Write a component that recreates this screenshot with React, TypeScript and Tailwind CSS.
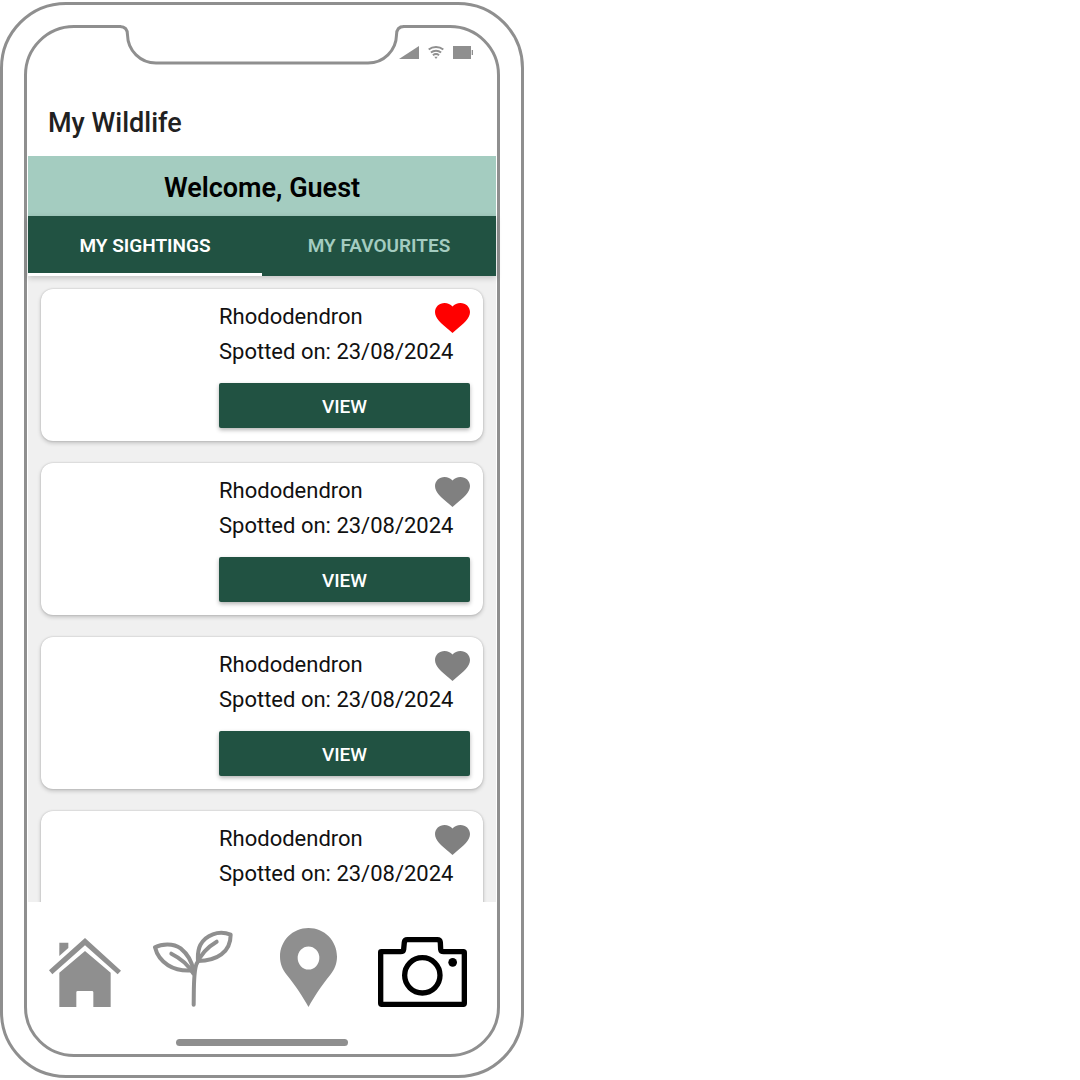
import React, { useState } from "react";

type Sighting = { id: number; name: string; date: string; favourite: boolean };

const initialSightings: Sighting[] = [
  { id: 1, name: "Rhododendron", date: "23/08/2024", favourite: true },
  { id: 2, name: "Rhododendron", date: "23/08/2024", favourite: false },
  { id: 3, name: "Rhododendron", date: "23/08/2024", favourite: false },
  { id: 4, name: "Rhododendron", date: "23/08/2024", favourite: false },
];

function Notch() {
  return (
    <svg
      className="absolute -top-[3px] left-1/2 -translate-x-1/2"
      width="284"
      height="42"
      viewBox="0 0 284 42"
      fill="none"
      aria-hidden="true"
    >
      <rect x="1" y="0" width="282" height="12" fill="#fff" />
      <path
        d="M0 1.5 C5 1.5 7.5 4 7.5 10 A28.5 28.5 0 0 0 36 38 H248 A28.5 28.5 0 0 0 276.5 10 C276.5 4 279 1.5 284 1.5"
        stroke="#8f8f8f"
        strokeWidth="3"
      />
    </svg>
  );
}

function StatusBar() {
  return (
    <div className="flex h-12 items-center justify-end gap-[9px] pr-[23px] text-[#8f8f8f]">
      <svg width="20" height="13" viewBox="0 0 20 13" fill="currentColor" aria-hidden="true">
        <path d="M0 13 L20 0 V13 Z" />
      </svg>
      <svg width="16" height="13" viewBox="0 0 16 13" fill="none" stroke="currentColor" strokeWidth="1.9" aria-hidden="true">
        <path d="M0.7 3.6 C4.8 0.2 11.2 0.2 15.3 3.6" />
        <path d="M2.9 6.5 C5.8 4.1 10.2 4.1 13.1 6.5" />
        <path d="M4.9 9.2 C6.8 7.7 9.2 7.7 11.1 9.2" />
        <path d="M6.300 10.800 H9.700 L8 13 Z" fill="currentColor" stroke="none" />
      </svg>
      <svg width="20" height="13" viewBox="0 0 20 13" fill="currentColor" aria-hidden="true">
        <path d="M0 0 H18 V13 H0 Z M18.7 4 H20 V9 H18.7 Z" />
      </svg>
    </div>
  );
}

function HeartIcon() {
  return (
    <svg width="35" height="30" viewBox="2 3 20 18.35" preserveAspectRatio="none" fill="currentColor" aria-hidden="true">
      <path d="M12 21.35l-1.45-1.32C5.4 15.36 2 12.28 2 8.5 2 5.42 4.42 3 7.5 3c1.74 0 3.41.81 4.5 2.09C13.09 3.81 14.76 3 16.5 3 19.58 3 22 5.42 22 8.5c0 3.78-3.4 6.86-8.55 11.54L12 21.35z" />
    </svg>
  );
}

function SightingCard({ sighting, onToggle }: { sighting: Sighting; onToggle: () => void }) {
  return (
    <li className="flex h-[152px] shrink-0 rounded-xl bg-white p-[13px] shadow-[0_2px_4px_rgba(0,0,0,0.2),0_0_2px_rgba(0,0,0,0.2)]">
      <div className="w-[165px] shrink-0" />
      <div className="flex min-w-0 flex-1 flex-col">
        <div className="flex justify-between">
          <h2 className="text-[22px] leading-[30px]">{sighting.name}</h2>
          <button
            type="button"
            aria-label="Favourite"
            aria-pressed={sighting.favourite}
            onClick={onToggle}
            className={sighting.favourite ? "mt-px text-[#ff0000]" : "mt-px text-[#808080]"}
          >
            <HeartIcon />
          </button>
        </div>
        <p className="mt-1 text-[22px] leading-[30px] whitespace-nowrap">Spotted on: {sighting.date}</p>
        <button
          type="button"
          className="mt-auto h-[45px] rounded-xs bg-[#215242] pt-1 text-[19px] font-medium text-white shadow-[0_2px_4px_rgba(0,0,0,0.3)]"
        >
          VIEW
        </button>
      </div>
    </li>
  );
}

function HomeIcon() {
  return (
    <svg width="72" height="69" viewBox="57 53 216 207" fill="currentColor" aria-hidden="true">
      <path d="M88 67 H115 V83 L88 107 Z" />
      <path d="M165 53 L273 151 L263 162 L165 75 L67 162 L57 150 Z" />
      <path d="M165 92 L242 157 V260 H190 V216 Q190 212 186 212 H143 Q139 212 139 216 V260 H88 V157 Z" />
    </svg>
  );
}

function PlantIcon() {
  return (
    <svg
      width="80"
      height="77"
      viewBox="369 31 240 231"
      fill="none"
      stroke="currentColor"
      strokeWidth="12"
      strokeLinecap="round"
      strokeLinejoin="round"
      aria-hidden="true"
    >
      <path d="M375 83 C395 72 430 70 452 86 C474 104 486 126 490 152 C430 158 386 128 375 83 Z" />
      <path d="M424 102 C452 116 476 136 490 162" />
      <path d="M602 45 C565 31 527 46 511 76 C503 92 503 108 504 124 C560 124 602 98 602 45 Z" />
      <path d="M560 66 C536 80 512 104 499 134 C490 160 492 200 491 255" />
    </svg>
  );
}

function PinIcon() {
  return (
    <svg width="57" height="79" viewBox="60 25 171 237" fill="currentColor" aria-hidden="true">
      <path
        fillRule="evenodd"
        d="M145.500 25 C98 25 60 63 60 111 C60 132 68 150 80 165 C108 200 128 230 145.500 262 C163 230 183 200 211 165 C223 150 231 132 231 111 C231 63 193 25 145.500 25 Z M113 115 A32.500 34.500 0 0 1 178 115 A32.500 34.500 0 0 1 113 115 Z"
      />
    </svg>
  );
}

function CameraIcon() {
  return (
    <svg width="89" height="70" viewBox="355 53 267 210" fill="none" stroke="currentColor" strokeWidth="16" strokeLinejoin="round" aria-hidden="true">
      <path d="M365 97 H423 Q431 97 432 90 L434 69 Q435 61 443 61 H533 Q541 61 542 69 L543 90 Q544 97 552 97 H611 Q614 97 614 100 V252 Q614 255 611 255 H366 Q363 255 363 252 V99 Q363 97 365 97 Z" />
      <circle cx="488" cy="168" r="53" />
      <circle cx="579" cy="129" r="13" fill="currentColor" stroke="none" />
    </svg>
  );
}

export default function App() {
  const [sightings, setSightings] = useState(initialSightings);
  const [tab, setTab] = useState("sightings");

  const toggle = (id: number) =>
    setSightings((items) => items.map((s) => (s.id === id ? { ...s, favourite: !s.favourite } : s)));

  const shown = tab === "sightings" ? sightings : sightings.filter((s) => s.favourite);

  return (
    <main className="h-screen bg-white py-0.5 font-[Roboto,sans-serif] text-[#111111]">
      <div className="flex h-full w-full max-w-[524px] flex-col rounded-[66px] border-3 border-[#8f8f8f] px-[21px] pt-5 pb-[18px]">
        <div className="relative flex min-h-0 flex-1 flex-col rounded-[50px] border-3 border-[#8f8f8f] px-px">
          <Notch />
          <StatusBar />
          <header className="flex h-20 items-center px-5 pt-[15px]">
            <h1 className="text-[27px] font-medium text-[#212121]">My Wildlife</h1>
          </header>
          <p className="bg-[#a4ccc0] pt-1 text-center text-[27px] leading-[56px] font-semibold text-black">Welcome, Guest</p>
          <div role="tablist" className="relative z-10 grid h-[60px] grid-cols-2 bg-[#215242] text-[19px] font-semibold shadow-[0_2px_6px_rgba(0,0,0,0.2)]">
            <button
              type="button"
              role="tab"
              aria-selected={tab === "sightings"}
              onClick={() => setTab("sightings")}
              className={tab === "sightings" ? "border-b-3 border-white pt-1 text-white" : "border-b-3 border-transparent pt-1 text-[#a4ccc0]"}
            >
              MY SIGHTINGS
            </button>
            <button
              type="button"
              role="tab"
              aria-selected={tab === "favourites"}
              onClick={() => setTab("favourites")}
              className={tab === "favourites" ? "border-b-3 border-white pt-1 text-white" : "border-b-3 border-transparent pt-1 text-[#a4ccc0]"}
            >
              MY FAVOURITES
            </button>
          </div>
          <ul className="flex min-h-0 flex-1 flex-col gap-[22px] overflow-hidden bg-[#f0f0f0] p-[13px]">
            {shown.map((s) => (
              <SightingCard key={s.id} sighting={s} onToggle={() => toggle(s.id)} />
            ))}
          </ul>
          <nav className="grid grid-cols-[104fr_127fr_98fr_89fr] items-end pt-[26px] pr-[29px] pl-[21px] text-[#8f8f8f]">
            <a href="#home" aria-label="Home">
              <HomeIcon />
            </a>
            <a href="#plants" aria-label="Plants">
              <PlantIcon />
            </a>
            <a href="#map" aria-label="Map">
              <PinIcon />
            </a>
            <a href="#camera" aria-label="Camera" className="text-black">
              <CameraIcon />
            </a>
          </nav>
          <div className="mt-8 mb-2 h-[7px] w-[172px] self-center rounded-full bg-[#8f8f8f]" />
        </div>
      </div>
    </main>
  );
}
